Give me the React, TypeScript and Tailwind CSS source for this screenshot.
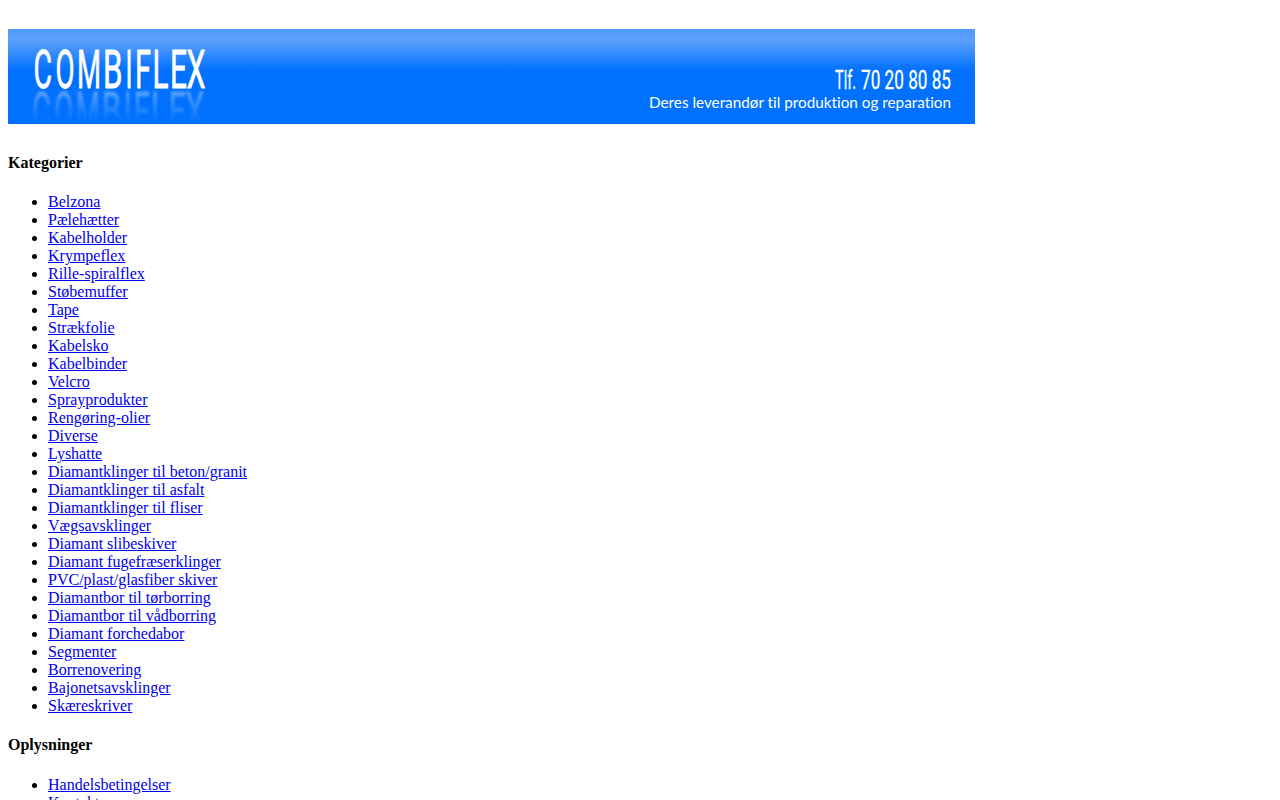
const categories = [
  'Belzona', 'Pælehætter', 'Kabelholder', 'Krympeflex', 'Rille-spiralflex', 'Støbemuffer', 'Tape',
  'Strækfolie', 'Kabelsko', 'Kabelbinder', 'Velcro', 'Sprayprodukter', 'Rengøring-olier', 'Diverse',
  'Lyshatte', 'Diamantklinger til beton/granit', 'Diamantklinger til asfalt',
  'Diamantklinger til fliser', 'Vægsavsklinger', 'Diamant slibeskiver', 'Diamant fugefræserklinger',
  'PVC/plast/glasfiber skiver', 'Diamantbor til tørborring', 'Diamantbor til vådborring',
  'Diamant forchedabor', 'Segmenter', 'Borrenovering', 'Bajonetsavsklinger', 'Skæreskriver',
];

const information = ['Handelsbetingelser', 'Kontakt'];

// Each letter of the wordmark with its left edge and advance width.
const wordmark: [string, number, number][] = [
  ['C', 25.5, 18.5],
  ['O', 47.5, 19],
  ['M', 69, 24],
  ['B', 95, 19.5],
  ['I', 117.5, 7],
  ['F', 127, 16],
  ['L', 144.5, 16],
  ['E', 162, 17],
  ['X', 178.5, 19],
];

function Wordmark() {
  return (
    <>
      {wordmark.map(([letter, x, width]) => (
        <text key={letter} x={x} y={58.7} textLength={width} lengthAdjust="spacingAndGlyphs">
          {letter}
        </text>
      ))}
    </>
  );
}

function Banner() {
  return (
    <div className="h-[95px] w-[967px] bg-[linear-gradient(to_bottom,#4c98fd_0px,#5ca1fb_9px,#559dfc_14px,#2d88fe_27px,#0873ff_39px,#0071ff_46px)]">
      <svg width="967" height="95" viewBox="0 0 967 95" className="block" fill="white">
        <defs>
          <linearGradient id="fade" x1="0" y1="60" x2="0" y2="94" gradientUnits="userSpaceOnUse">
            <stop offset="0" stopColor="white" stopOpacity="0.36" />
            <stop offset="1" stopColor="white" stopOpacity="0" />
          </linearGradient>
          <mask id="echo" maskUnits="userSpaceOnUse" x="0" y="60" width="220" height="35">
            <rect x="0" y="60" width="220" height="35" fill="url(#fade)" />
          </mask>
        </defs>
        <g className="font-['Roboto',sans-serif] text-[53.5px] font-normal" stroke="white" strokeWidth="0.8">
          <Wordmark />
        </g>
        {/* Fading copy of the wordmark below it, upright like the original. */}
        <g mask="url(#echo)" aria-hidden="true">
          <g transform="translate(-1.2 42)" className="font-['Roboto',sans-serif] text-[53.5px] font-normal blur-[0.8px]" stroke="white" strokeWidth="1">
            <Wordmark />
          </g>
        </g>
        <g className="font-['Roboto',sans-serif] text-[25px]" stroke="white" strokeWidth="0.3">
          <text x="827" y="59.9" textLength="21" lengthAdjust="spacingAndGlyphs">Tlf.</text>
          <text x="853" y="59.9" textLength="90" lengthAdjust="spacingAndGlyphs">70 20 80 85</text>
        </g>
        <text x="641" y="78.5" textLength="302" lengthAdjust="spacingAndGlyphs" className="font-['Lato',sans-serif] text-[15px] [font-variant-ligatures:none]">
          Deres leverandør til produktion og reparation
        </text>
      </svg>
    </div>
  );
}

function Section({ title, items }: { title: string; items: string[] }) {
  return (
    <section>
      <h4 className="mb-[21.28px] font-bold">{title}</h4>
      <ul className="mb-[21.28px] list-disc pl-10">
        {items.map((item) => (
          <li key={item}>
            <a href="#" className="text-[#0000ee] underline">{item}</a>
          </li>
        ))}
      </ul>
    </section>
  );
}

export default function App() {
  return (
    <div className="h-[800px] overflow-hidden bg-white px-2 pt-[29px] font-['Liberation_Serif',serif] text-[16px] leading-[18px] text-black">
      <Banner />
      <main className="pt-[29.8px]">
        <Section title="Kategorier" items={categories} />
        <Section title="Oplysninger" items={information} />
      </main>
    </div>
  );
}
